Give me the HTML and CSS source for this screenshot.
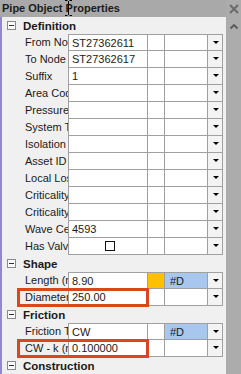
FILE: index.html
```html
<!DOCTYPE html>
<html lang="en">

<head>
    <meta charset="UTF-8">
    <meta name="viewport" content="width=device-width, initial-scale=1.0">
    <title>Pipe Object Properties</title>
    <link rel="stylesheet" href="styles.css">
</head>

<body>
    <div class="window">
        <div class="main">
            <div class="titlebar">
                Pipe Object Properties
                <svg class="cursor" width="7" height="16" viewBox="0 0 7 16">
                    <path d="M0 0.5h2.5M4.5 0.5h2.5M3.5 1v14M0 15.5h2.5M4.5 15.5h2.5" stroke="#000" fill="none" />
                </svg>
            </div>
            <div class="grid">
                <div class="group"><span class="toggle"></span>Definition</div>
                <div class="row">
                    <div class="label">From Node</div>
                    <div class="cell value">ST27362611</div>
                    <div class="cell small"></div>
                    <div class="cell flag"></div>
                    <div class="drop"></div>
                </div>
                <div class="row">
                    <div class="label">To Node</div>
                    <div class="cell value">ST27362617</div>
                    <div class="cell small"></div>
                    <div class="cell flag"></div>
                    <div class="drop"></div>
                </div>
                <div class="row">
                    <div class="label">Suffix</div>
                    <div class="cell value">1</div>
                    <div class="cell small"></div>
                    <div class="cell flag"></div>
                    <div class="drop"></div>
                </div>
                <div class="row">
                    <div class="label">Area Code</div>
                    <div class="cell value"></div>
                    <div class="cell small"></div>
                    <div class="cell flag"></div>
                    <div class="drop"></div>
                </div>
                <div class="row">
                    <div class="label">Pressure Zone</div>
                    <div class="cell value"></div>
                    <div class="cell small"></div>
                    <div class="cell flag"></div>
                    <div class="drop"></div>
                </div>
                <div class="row">
                    <div class="label">System Type</div>
                    <div class="cell value"></div>
                    <div class="cell small"></div>
                    <div class="cell flag"></div>
                    <div class="drop"></div>
                </div>
                <div class="row">
                    <div class="label">Isolation</div>
                    <div class="cell value"></div>
                    <div class="cell small"></div>
                    <div class="cell flag"></div>
                    <div class="drop"></div>
                </div>
                <div class="row">
                    <div class="label">Asset ID</div>
                    <div class="cell value"></div>
                    <div class="cell small"></div>
                    <div class="cell flag"></div>
                    <div class="drop"></div>
                </div>
                <div class="row">
                    <div class="label">Local Loss</div>
                    <div class="cell value"></div>
                    <div class="cell small"></div>
                    <div class="cell flag"></div>
                    <div class="drop"></div>
                </div>
                <div class="row">
                    <div class="label">Criticality</div>
                    <div class="cell value"></div>
                    <div class="cell small"></div>
                    <div class="cell flag"></div>
                    <div class="drop"></div>
                </div>
                <div class="row">
                    <div class="label">Criticality</div>
                    <div class="cell value"></div>
                    <div class="cell small"></div>
                    <div class="cell flag"></div>
                    <div class="drop"></div>
                </div>
                <div class="row">
                    <div class="label">Wave Celerity</div>
                    <div class="cell value">4593</div>
                    <div class="cell small"></div>
                    <div class="cell flag"></div>
                    <div class="drop"></div>
                </div>
                <div class="row">
                    <div class="label">Has Valve</div>
                    <div class="cell value center"><span class="checkbox"></span></div>
                    <div class="cell small"></div>
                    <div class="cell flag"></div>
                    <div class="drop"></div>
                </div>

                <div class="group"><span class="toggle"></span>Shape</div>
                <div class="row">
                    <div class="label">Length (m)</div>
                    <div class="cell value">8.90</div>
                    <div class="cell small orange"></div>
                    <div class="cell flag blue">#D</div>
                    <div class="drop"></div>
                </div>
                <div class="row marked">
                    <div class="label">Diameter</div>
                    <div class="cell value">250.00</div>
                    <div class="cell small"></div>
                    <div class="cell flag"></div>
                    <div class="drop"></div>
                </div>

                <div class="group"><span class="toggle"></span>Friction</div>
                <div class="row">
                    <div class="label">Friction Type</div>
                    <div class="cell value">CW</div>
                    <div class="cell small"></div>
                    <div class="cell flag blue">#D</div>
                    <div class="drop"></div>
                </div>
                <div class="row marked">
                    <div class="label">CW - k (mm)</div>
                    <div class="cell value">0.100000</div>
                    <div class="cell small"></div>
                    <div class="cell flag"></div>
                    <div class="drop"></div>
                </div>

                <div class="group"><span class="toggle"></span>Construction</div>
            </div>
        </div>
        <div class="scroll">
            <svg class="close" width="10" height="10" viewBox="0 0 10 10">
                <path d="M1 1L9 9M9 1L1 9" stroke="#6b6b6b" stroke-width="2" fill="none" />
            </svg>
            <svg class="up" width="10" height="7" viewBox="0 0 10 7">
                <path d="M1.5 5.5L5 2L8.5 5.5" stroke="#5a5a5a" stroke-width="1.8" fill="none" />
            </svg>
        </div>
    </div>
</body>

</html>
```

FILE: styles.css
```css
body {
    margin: 0;
    font-family: "Liberation Sans", Arial, sans-serif;
    font-size: 11px;
    color: #1a1a1a;
    background-color: #f0f0f0;
}

.window {
    display: flex;
    width: 241px;
    height: 374px;
    overflow: hidden;
}

.main {
    width: 226px;
    display: flex;
    flex-direction: column;
}

.titlebar {
    position: relative;
    height: 17px;
    line-height: 17px;
    padding-left: 2px;
    background-color: #a9a9a9;
    font-weight: bold;
    color: #1c1c1c;
    white-space: nowrap;
}

.cursor {
    position: absolute;
    left: 65px;
    top: 0;
}

.grid {
    flex: 1;
    border-left: 2px solid #9486d0;
    background-color: #f0f0f0;
}

.group {
    display: flex;
    align-items: center;
    height: 17px;
    font-weight: bold;
    font-size: 11.5px;
}

.toggle {
    position: relative;
    box-sizing: border-box;
    width: 9px;
    height: 9px;
    margin: 0 7px 0 5px;
    border: 1px solid #8a8a8a;
    background-color: #fafafa;
}

.toggle::after {
    content: "";
    position: absolute;
    left: 1px;
    top: 3px;
    width: 5px;
    height: 1px;
    background-color: #333;
}

.row {
    position: relative;
    display: grid;
    grid-template-columns: 66px 79px 17px 43px 16px;
    height: 17px;
}

.label {
    padding-left: 23px;
    line-height: 17px;
    white-space: nowrap;
    overflow: hidden;
}

.cell {
    box-sizing: border-box;
    height: 17px;
    line-height: 16px;
    background-color: #fff;
    border-left: 1px solid #a0a0a0;
    border-bottom: 1px solid #a0a0a0;
    white-space: nowrap;
    overflow: hidden;
}

.group + .row .cell,
.group + .row .drop {
    border-top: 1px solid #a0a0a0;
}

.value {
    padding-left: 3px;
}

.center {
    display: flex;
    align-items: center;
    justify-content: center;
}

.checkbox {
    box-sizing: border-box;
    width: 10px;
    height: 10px;
    border: 1px solid #111;
    background-color: #fff;
}

.flag {
    padding-left: 5px;
}

.orange {
    background-color: #ffc000;
}

.blue {
    background-color: #a7c7ef;
}

.drop {
    box-sizing: border-box;
    position: relative;
    height: 17px;
    background-color: #f3f3f3;
    border-left: 1px solid #a0a0a0;
    border-bottom: 1px solid #a0a0a0;
    border-right: 1px solid #a0a0a0;
}

.drop::after {
    content: "";
    position: absolute;
    left: 5px;
    top: 6px;
    border-top: 3px solid #000;
    border-left: 3px solid transparent;
    border-right: 3px solid transparent;
}

.marked::after {
    content: "";
    position: absolute;
    left: 15px;
    top: -1px;
    width: 132px;
    height: 19px;
    box-sizing: border-box;
    border: 3px solid #d9481c;
}

.scroll {
    width: 15px;
    background-color: #acacac;
    display: flex;
    flex-direction: column;
    align-items: center;
}

.close {
    margin-top: 4px;
}

.up {
    margin-top: 9px;
}
```
